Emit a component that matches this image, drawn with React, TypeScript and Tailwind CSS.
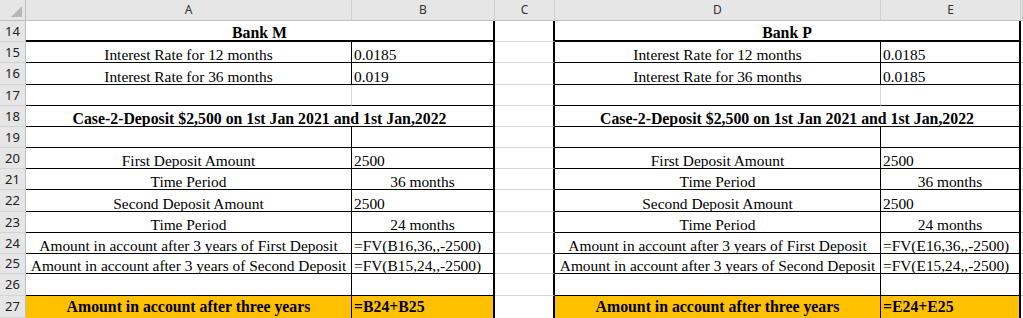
type Edge = 'g' | 'k' | 'K' | 'n';

type Cell = {
  t?: string;
  span?: boolean;
  left?: boolean;
  bold?: boolean;
  orange?: boolean;
  r: Edge;
  d: Edge;
};

const RIGHT: Record<Edge, string> = {
  g: 'border-r border-r-[#d4d4d4]',
  k: 'border-r border-r-black',
  K: 'border-r-2 border-r-black',
  n: '',
};

const BOTTOM: Record<Edge, string> = {
  g: 'border-b border-b-[#d4d4d4]',
  k: 'border-b border-b-black',
  K: 'border-b-2 border-b-black',
  n: '',
};

const ROWS = [14, 15, 16, 17, 18, 19, 20, 21, 22, 23, 24, 25, 26, 27];
const COL_HEADS = ['A', 'B', 'C', 'D', 'E', ''];

// cells for one bank block (label column + value column), row by row
function bankBlock(name: string, rate1: string, rate2: string, col: string): Cell[][] {
  const pair = (label: string, value: string, center = false): Cell[] => [
    { t: label, r: 'k', d: 'k' },
    { t: value, left: !center, r: 'K', d: 'k' },
  ];
  return [
    [{ t: name, span: true, bold: true, r: 'K', d: 'K' }],
    pair('Interest Rate for 12 months', rate1),
    pair('Interest Rate for 36 months', rate2),
    [
      { r: 'g', d: 'k' },
      { r: 'K', d: 'k' },
    ],
    [{ t: 'Case-2-Deposit $2,500 on 1st Jan 2021 and 1st Jan,2022', span: true, bold: true, r: 'K', d: 'k' }],
    pair('', ''),
    pair('First Deposit Amount', '2500'),
    pair('Time Period', '36 months', true),
    pair('Second Deposit Amount', '2500'),
    pair('Time Period', '24 months', true),
    pair('Amount in account after 3 years of First Deposit', `=FV(${col}16,36,,-2500)`),
    pair('Amount in account after 3 years of Second Deposit', `=FV(${col}15,24,,-2500)`),
    pair('', ''),
    [
      { t: 'Amount in account after three years', bold: true, orange: true, r: 'k', d: 'n' },
      { t: `=${col}24+${col}25`, left: true, bold: true, orange: true, r: 'K', d: 'n' },
    ],
  ];
}

const bankM = bankBlock('Bank M', '0.0185', '0.019', 'B');
const bankP = bankBlock('Bank P', '0.0185', '0.0185', 'E');

function SheetCell({ c }: { c: Cell }) {
  return (
    <div
      className={`flex items-end overflow-hidden whitespace-nowrap px-[2px] leading-[15px] text-black ${
        c.span ? 'col-span-2' : ''
      } ${c.left ? 'justify-start' : 'justify-center'} ${
        c.bold ? 'font-bold text-[15.8px]' : 'text-[15.4px]'
      } ${c.orange ? 'bg-[#ffc000] pb-[4px]' : 'bg-white'} ${RIGHT[c.r]} ${BOTTOM[c.d]}`}
    >
      {c.t}
    </div>
  );
}

export default function App() {
  return (
    <div className="w-[1023px] h-[318px] overflow-hidden bg-white font-['Liberation_Serif','Times_New_Roman',serif]">
      <div className="grid grid-cols-[26px_326px_143px_60px_326px_140px_1fr] grid-rows-[21px_21px_21px_22px_21px_21px_21px_21px_21px_22px_21px_21px_20px_22px_22px]">
        {/* corner */}
        <div className="flex items-end justify-end bg-[#e6e6e6] border-r border-r-[#bfbfbf] border-b border-b-[#bfbfbf] pr-[3px] pb-[3px]">
          <svg width="11" height="11" viewBox="0 0 11 11">
            <polygon points="11,0 11,11 0,11" fill="#b8b8b8" />
          </svg>
        </div>
        {COL_HEADS.map((h, i) => (
          <div
            key={i}
            className="flex items-center justify-center bg-[#e6e6e6] border-r border-r-[#d0d0d0] border-b border-b-[#bfbfbf] font-['Noto_Sans',sans-serif] text-[12px] text-[#333]"
          >
            {h}
          </div>
        ))}

        {ROWS.map((n, i) => (
          <div key={n} className="contents">
            <div className="flex items-center justify-center pt-px bg-[#e6e6e6] border-r border-r-[#bfbfbf] border-b border-b-[#d4d4d4] font-['Noto_Sans',sans-serif] text-[13px] text-[#222]">
              {n}
            </div>
            {bankM[i].map((c, j) => (
              <SheetCell key={`m${j}`} c={c} />
            ))}
            <div className={`bg-white border-r-2 border-r-black ${n === 27 ? '' : 'border-b border-b-[#d4d4d4]'}`} />
            {bankP[i].map((c, j) => (
              <SheetCell key={`p${j}`} c={c} />
            ))}
            <div className={`bg-white ${n === 27 ? '' : 'border-b border-b-[#d4d4d4]'}`} />
          </div>
        ))}
      </div>
    </div>
  );
}
